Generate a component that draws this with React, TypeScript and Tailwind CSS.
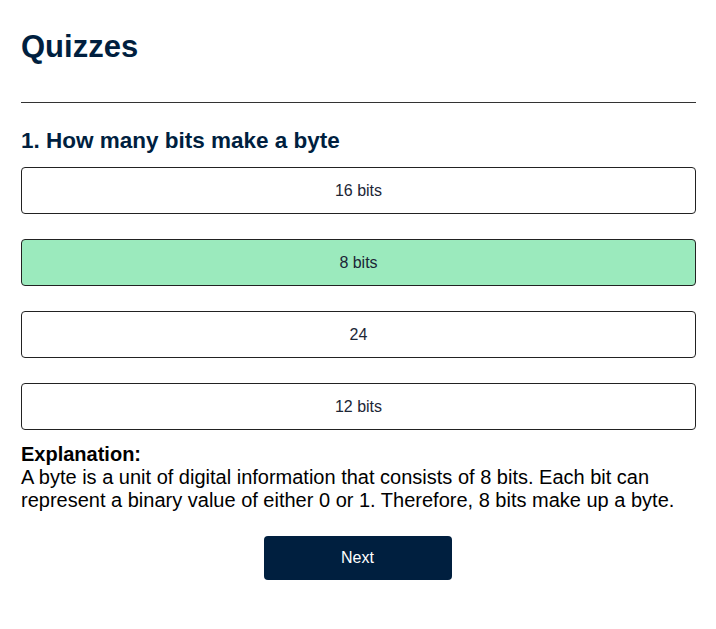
import { useState } from "react";

const options = ["16 bits", "8 bits", "24", "12 bits"];

const App = () => {
  const [selected, setSelected] = useState(1);

  return (
    <div
      className="pl-[21px] pr-5 pt-[30px] bg-white min-h-screen text-black"
      style={{ fontFamily: '"Liberation Sans", Arial, sans-serif' }}
    >
      <h1 className="text-[31px] leading-[34px] font-bold text-[#001f3f]">Quizzes</h1>
      <hr className="mt-[38px] border-t border-[#333333]" />
      <h2 className="mt-[25px] text-[22.5px] leading-[25px] font-bold text-[#001f3f]">
        1. How many bits make a byte
      </h2>
      <div className="mt-[14px] flex flex-col gap-[25px]">
        {options.map((option, i) => (
          <button
            key={option}
            onClick={() => setSelected(i)}
            className={`h-[47px] w-full rounded border border-[#222222] text-base text-[#1c2636] ${
              selected === i ? "bg-[#9beabd]" : "bg-white"
            }`}
          >
            {option}
          </button>
        ))}
      </div>
      <div className="mt-[13px] text-[20px] leading-[23px]">
        <p className="font-bold">Explanation:</p>
        <p>
          A byte is a unit of digital information that consists of 8 bits. Each bit can
          represent a binary value of either 0 or 1. Therefore, 8 bits make up a byte.
        </p>
      </div>
      <div className="mt-6 flex justify-center pr-[2px]">
        <button className="h-[44px] w-[188px] rounded bg-[#001f3f] text-base text-white">
          Next
        </button>
      </div>
    </div>
  );
};

export default App;
